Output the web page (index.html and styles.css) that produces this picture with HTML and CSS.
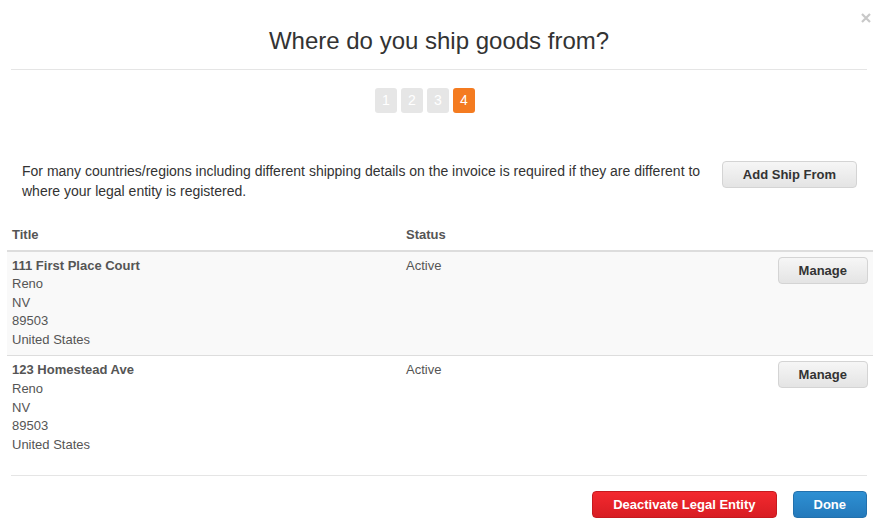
FILE: index.html
```html
<!DOCTYPE html>
<html lang="en">
<head>
<meta charset="utf-8">
<title>Where do you ship goods from?</title>
<link rel="stylesheet" href="styles.css">
</head>
<body>
<div class="modal">
  <button class="close" aria-label="Close">
    <svg width="10" height="10" viewBox="0 0 10 10"><path d="M1 1L9 9M9 1L1 9" stroke="#c8c8c8" stroke-width="2.2" fill="none"/></svg>
  </button>
  <div class="modal-header">
    <h1 class="modal-title">Where do you ship goods from?</h1>
  </div>
  <div class="steps">
    <span class="step">1</span>
    <span class="step">2</span>
    <span class="step">3</span>
    <span class="step active">4</span>
  </div>
  <div class="intro">
    <p class="intro-text">For many countries/regions including different shipping details on the invoice is required if they are different to where your legal entity is registered.</p>
    <button class="btn">Add Ship From</button>
  </div>
  <table class="ship-table">
    <thead>
      <tr>
        <th class="col-title">Title</th>
        <th class="col-status">Status</th>
        <th class="col-action"></th>
      </tr>
    </thead>
    <tbody>
      <tr class="striped">
        <td><strong>111 First Place Court</strong><br>Reno<br>NV<br>89503<br>United States</td>
        <td>Active</td>
        <td class="col-action"><button class="btn">Manage</button></td>
      </tr>
      <tr>
        <td><strong>123 Homestead Ave</strong><br>Reno<br>NV<br>89503<br>United States</td>
        <td>Active</td>
        <td class="col-action"><button class="btn">Manage</button></td>
      </tr>
    </tbody>
  </table>
  <div class="modal-footer">
    <button class="btn btn-danger">Deactivate Legal Entity</button>
    <button class="btn btn-primary">Done</button>
  </div>
</div>
</body>
</html>
```

FILE: styles.css
```css
* { box-sizing: border-box; }
html, body { margin: 0; padding: 0; background: #fff; }
body {
  font-family: "Liberation Sans", Arial, sans-serif;
  color: #333;
  width: 877px;
  height: 525px;
  overflow: hidden;
}
.modal {
  position: relative;
  padding: 0 4px 0 7px;
}
.close {
  position: absolute;
  top: 13px;
  right: 6px;
  border: 0;
  background: transparent;
  padding: 0;
  width: 10px;
  height: 10px;
  line-height: 0;
}
.modal-header {
  margin: 0 6px 0 4px;
  border-bottom: 1px solid #e5e5e5;
  padding: 28px 0 15px;
}
.modal-title {
  margin: 0;
  font-size: 24px;
  font-weight: normal;
  line-height: 26px;
  text-align: center;
  color: #333;
}
.steps {
  display: flex;
  justify-content: center;
  gap: 4px;
  margin-top: 18px;
  padding-right: 30px;
}
.step {
  width: 22px;
  height: 25px;
  border-radius: 3px;
  background: #e6e6e6;
  color: #fff;
  font-size: 14px;
  line-height: 25px;
  text-align: center;
}
.step.active { background: #f47b20; }
.intro {
  display: flex;
  align-items: flex-start;
  justify-content: space-between;
  margin-top: 48px;
  padding: 0 16px 0 15px;
}
.intro-text {
  margin: 0;
  width: 690px;
  font-size: 14px;
  line-height: 20px;
  color: #333;
}
.btn {
  font-family: "Liberation Sans", Arial, sans-serif;
  font-size: 13px;
  font-weight: bold;
  line-height: 17px;
  padding: 4px 20px;
  border: 1px solid #d4d4d4;
  border-radius: 4px;
  color: #333;
  background: linear-gradient(#f6f6f6, #e4e4e4);
  white-space: nowrap;
}
.ship-table {
  width: 866px;
  margin-top: 17px;
  border-collapse: collapse;
  font-size: 13px;
  line-height: 1.42857;
  color: #555;
}
.ship-table th {
  text-align: left;
  font-weight: bold;
  padding: 8px 5px 5px;
  border-bottom: 2px solid #ddd;
  color: #555;
}
.ship-table td {
  vertical-align: top;
  padding: 5px 5px 6px;
}
.ship-table td strong { color: #555; }
.col-title { width: 394px; }
.ship-table .col-action { text-align: right; padding-right: 5px; }
.ship-table tr.striped td {
  background: #f9f9f9;
  border-bottom: 1px solid #ddd;
}
.modal-footer {
  margin: 15px 6px 0 4px;
  border-top: 1px solid #e5e5e5;
  padding-top: 15px;
  display: flex;
  justify-content: flex-end;
  gap: 16px;
}
.modal-footer .btn { color: #fff; }
.btn-danger {
  background: linear-gradient(#f3292f, #d81d23);
  border-color: #c51a1f;
}
.btn-primary {
  background: linear-gradient(#2e90d3, #2479bb);
  border-color: #2371ad;
}
```
